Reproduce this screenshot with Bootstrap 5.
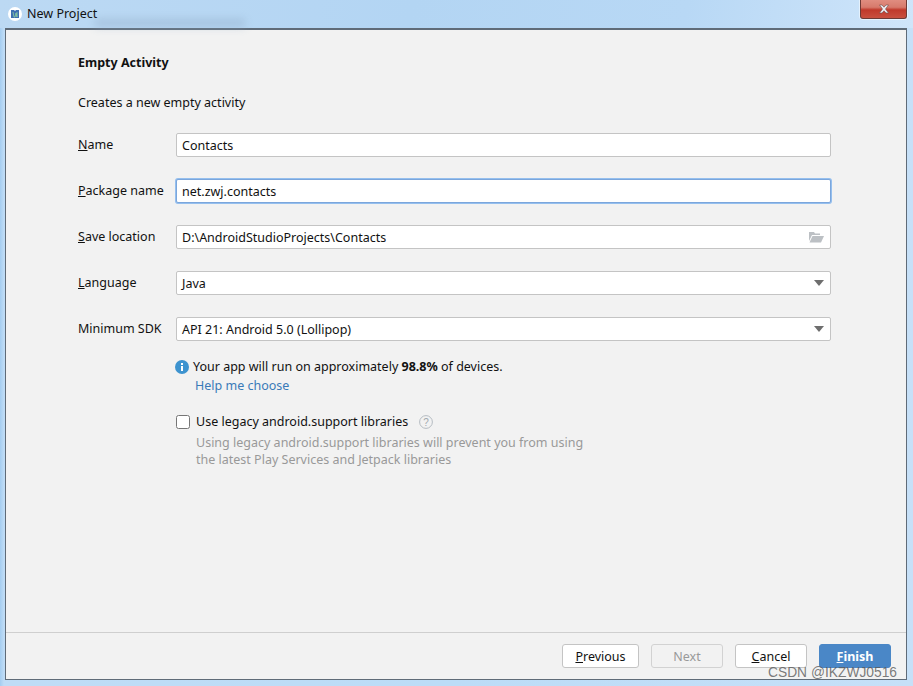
<!DOCTYPE html>
<html lang="en">
<head>
    <meta charset="UTF-8">
    <meta name="viewport" content="width=device-width, initial-scale=1.0">
    <title>New Project</title>
    <link href="https://cdn.jsdelivr.net/npm/bootstrap@5.3.0/dist/css/bootstrap.min.css" rel="stylesheet">
    <style>
        html, body { height: 100%; }
        body {
            width: 913px;
            height: 686px;
            overflow: hidden;
            font-family: "Noto Sans", "Noto Sans CJK SC", sans-serif;
            font-size: 12.5px;
            color: #111;
            background: #bcdcf7;
        }
        .win-frame {
            height: 686px;
            padding: 0 6px 6px 5px;
            position: relative;
            background: linear-gradient(90deg, #a5cdf0 0, #bfdcf6 4px, #bcdcf7 50%, #c6e0f8 100%);
        }
        .win-title {
            height: 28px;
            background: linear-gradient(100deg, #bcd9f3 0%, #b3d5f3 45%, #b8d8f5 75%, #cfe5fa 100%);
            margin: 0 -6px 0 -5px;
            padding-left: 8px;
        }
        .win-title-text { font-size: 12.5px; margin-left: 5px; padding-top: 1px; }
        .app-badge {
            width: 14px;
            height: 14px;
            background: #fff;
            border-radius: 50%;
        }
        .win-close {
            position: absolute;
            top: 0;
            right: 6px;
            width: 47px;
            height: 19px;
            border: 1px solid #6d3a36;
            border-top: 0;
            border-radius: 0 0 3px 3px;
            background: linear-gradient(#e08d80 0, #d77a6c 40%, #c0392b 55%, #c9503f 100%);
            box-shadow: 0 0 0 1px rgba(255,255,255,.5);
        }
        .blur-behind {
            position: absolute;
            left: 95px;
            top: 19px;
            width: 150px;
            height: 8px;
            background: #8fa9c4;
            opacity: .45;
            filter: blur(4px);
        }
        .client-pane {
            height: 652px;
            background: #f2f2f2;
            border: 1px solid #5f6b78;
            border-top-width: 2px;
        }
        .form-area { flex: 1 1 auto; padding: 24px 75px 0 72px; }
        .heading-text { font-weight: 700; font-size: 12.5px; line-height: 18px; margin-bottom: 22px; }
        .desc-text { line-height: 18px; margin-bottom: 21px; }
        .field-row { height: 24px; margin-bottom: 22px; }
        .field-label { width: 98px; flex: none; padding-top: 1px; }
        .field-box {
            flex: 1 1 auto;
            height: 24px;
            background: #fff;
            border: 1px solid #c4c4c4;
            border-radius: 2px;
            padding: 2px 5px 0;
            position: relative;
        }
        .field-focus {
            border-color: #7ba6dc;
            box-shadow: 0 0 0 1px #95bfee;
        }
        .field-icon { position: absolute; right: 6px; top: 50%; transform: translateY(-50%); }
        .info-block { margin-top: -5px; padding-left: 98px; }
        .info-line { line-height: 18px; margin-left: -1px; }
        .help-link { display: block; color: #3a7ab8; text-decoration: none; line-height: 18px; margin: 1px 0 0 19px; }
        .legacy-row { margin-top: 18px; line-height: 18px; }
        .box-check {
            width: 14px;
            height: 14px;
            background: #fff;
            border: 1px solid #b0b0b0;
            border-radius: 2px;
            margin: 0 6px 0 0;
        }
        .legacy-note { color: #999; line-height: 17px; margin: 3px 0 0 20px; }
        .hint-mark { margin-left: 11px; }
        .footer-bar {
            height: 47px;
            border-top: 1px solid #cfcfcf;
            padding: 11px 15px 0 0;
            gap: 12px;
        }
        .dlg-btn {
            width: 72px;
            height: 24px;
            padding: 2px 0 0;
            font-size: 12.5px;
            line-height: 1;
            color: #111;
            background: #fff;
            border: 1px solid #c4c4c4;
            border-radius: 3px;
        }
        .btn-prev { width: 77px; }
        .dlg-btn:disabled { background: #f2f2f2; color: #999; border-color: #d2d2d2; opacity: 1; }
        .dlg-primary { background: #4a87c7; border-color: #4a87c7; color: #fff; font-weight: 700; }
        .wm-text {
            position: absolute;
            right: 16px;
            bottom: 5px;
            font-family: "Liberation Sans", sans-serif;
            font-size: 13.8px;
            line-height: 16px;
            color: rgba(90, 90, 90, .8);
        }
    </style>
</head>
<body>
    <div class="win-frame">
        <div class="win-title d-flex align-items-center">
            <span class="app-badge d-flex align-items-center justify-content-center">
                <svg width="10" height="10" viewBox="0 0 10 10"><path d="M1 1h3l1 1 1-1h3v8H1z" fill="#3f6fb0"/><path d="M3 3l1 5h1l1-4 1 4V3" fill="none" stroke="#8fd0a0" stroke-width=".8"/></svg>
            </span>
            <span class="win-title-text">New Project</span>
        </div>
        <div class="blur-behind"></div>
        <div class="win-close d-flex align-items-center justify-content-center">
            <svg width="12" height="10" viewBox="0 0 12 10"><path d="M1.5 1h2.5l2 2.2L8 1h2.5L7.5 5l3 4H8L6 6.8 4 9H1.5l3-4z" fill="#eef0f4" stroke="#6b4a48" stroke-width=".6"/></svg>
        </div>

        <div class="client-pane d-flex flex-column">
            <div class="form-area">
                <div class="heading-text">Empty Activity</div>
                <div class="desc-text">Creates a new empty activity</div>

                <div class="field-row d-flex align-items-center">
                    <div class="field-label"><u>N</u>ame</div>
                    <div class="field-box d-flex align-items-center">Contacts</div>
                </div>
                <div class="field-row d-flex align-items-center">
                    <div class="field-label"><u>P</u>ackage name</div>
                    <div class="field-box field-focus d-flex align-items-center">net.zwj.contacts</div>
                </div>
                <div class="field-row d-flex align-items-center">
                    <div class="field-label"><u>S</u>ave location</div>
                    <div class="field-box d-flex align-items-center">D:\AndroidStudioProjects\Contacts
                        <svg class="field-icon" width="15" height="12" viewBox="0 0 15 12"><path d="M0 1h5l1 1.5h5V4H3L0 10z" fill="#bcc0c4"/><path d="M3.5 5H15l-3 6.5H0.5z" fill="#bcc0c4"/></svg>
                    </div>
                </div>
                <div class="field-row d-flex align-items-center">
                    <div class="field-label"><u>L</u>anguage</div>
                    <div class="field-box d-flex align-items-center">Java
                        <svg class="field-icon" width="10" height="6" viewBox="0 0 10 6"><path d="M0 0h10L5 6z" fill="#6e6e6e"/></svg>
                    </div>
                </div>
                <div class="field-row d-flex align-items-center">
                    <div class="field-label">Minimum SDK</div>
                    <div class="field-box d-flex align-items-center">API 21: Android 5.0 (Lollipop)
                        <svg class="field-icon" width="10" height="6" viewBox="0 0 10 6"><path d="M0 0h10L5 6z" fill="#6e6e6e"/></svg>
                    </div>
                </div>

                <div class="info-block">
                    <div class="info-line d-flex align-items-center gap-1">
                        <svg width="14" height="14" viewBox="0 0 14 14"><circle cx="7" cy="7" r="7" fill="#3d93cf"/><rect x="6" y="6" width="2" height="5" fill="#fff"/><rect x="6" y="3" width="2" height="2" fill="#fff"/></svg>
                        <span>Your app will run on approximately <b>98.8%</b> of devices.</span>
                    </div>
                    <a class="help-link" href="#">Help me choose</a>

                    <div class="legacy-row d-flex align-items-center">
                        <input class="box-check" type="checkbox" aria-label="Use legacy android.support libraries">
                        <span>Use legacy android.support libraries</span>
                        <svg class="hint-mark" width="14" height="14" viewBox="0 0 14 14"><circle cx="7" cy="7" r="6.4" fill="none" stroke="#b5bcc2" stroke-width="1"/><text x="7" y="10.5" font-size="10" font-family="Liberation Sans" text-anchor="middle" fill="#a0a8ae">?</text></svg>
                    </div>
                    <div class="legacy-note">Using legacy android.support libraries will prevent you from using<br>the latest Play Services and Jetpack libraries</div>
                </div>
            </div>
            <div class="footer-bar d-flex justify-content-end">
                <button type="button" class="dlg-btn btn-prev"><u>P</u>revious</button>
                <button type="button" class="dlg-btn" disabled>Next</button>
                <button type="button" class="dlg-btn"><u>C</u>ancel</button>
                <button type="button" class="dlg-btn dlg-primary"><u>F</u>inish</button>
            </div>
        </div>
        <div class="wm-text">CSDN @IKZWJ0516</div>
    </div>
    <script src="https://cdn.jsdelivr.net/npm/bootstrap@5.3.0/dist/js/bootstrap.bundle.min.js"></script>
</body>
</html>
